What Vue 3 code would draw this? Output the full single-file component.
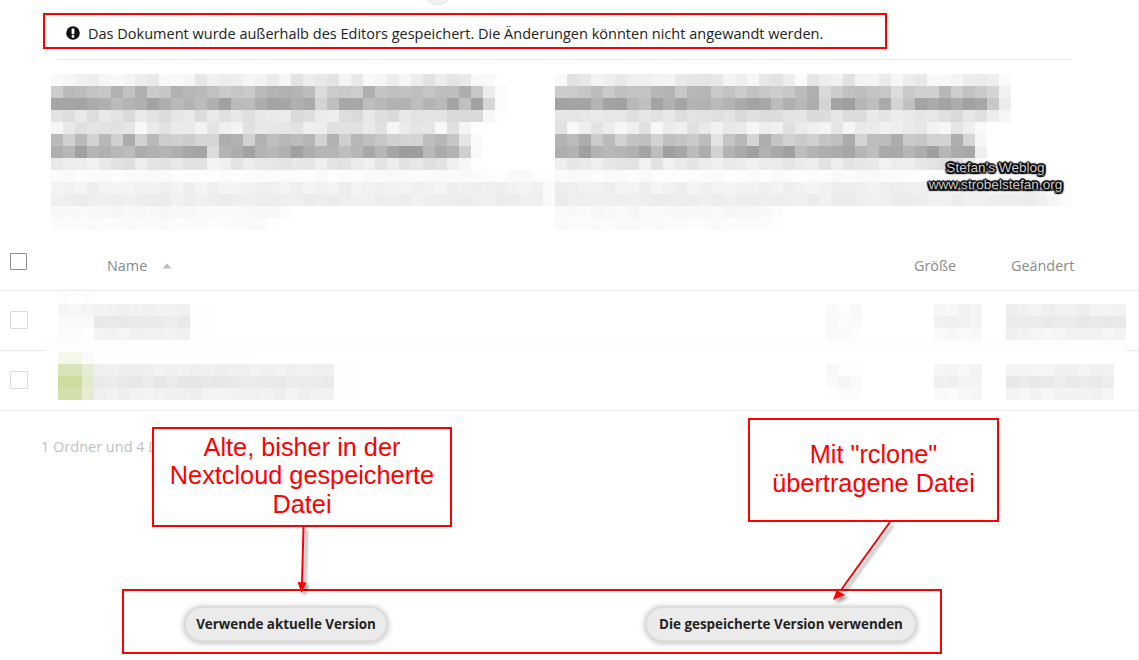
<script setup>
function noise(a, b) {
  let h = (a * 374761393 + b * 668265263) | 0
  h = Math.imul(h ^ (h >>> 13), 1274126177)
  return (((h ^ (h >>> 16)) >>> 0) % 1000) / 1000 - 0.5
}
function gray(v) {
  const n = Math.max(0, Math.min(255, Math.round(v)))
  return `rgb(${n},${n},${n})`
}
function blockRows(seed, spec, gaps) {
  return spec.map(([count, tone, spread, last, prev], r) => {
    const cells = []
    for (let c = 0; c < count; c++) {
      let v = tone + noise(seed + r, c) * spread
      const fromEnd = count - 1 - c
      if (fromEnd === 0) v += (255 - v) * last
      else if (fromEnd === 1) v += (255 - v) * prev
      const g = gaps[r]
      if (g && g.includes(c)) v += (255 - v) * 0.45
      cells.push(gray(v))
    }
    return cells
  })
}
const leftBlock = blockRows(11, [
  [38, 238, 26, 0.9, 0.5], [38, 190, 34, 0.95, 0.6], [38, 176, 34, 0.95, 0.45], [38, 226, 18, 0.95, 0.6],
  [36, 236, 26, 0.9, 0.5], [36, 192, 44, 0.92, 0.6], [36, 174, 34, 0.92, 0.5], [36, 232, 20, 0.9, 0.5],
  [42, 251, 5, 0.6, 0], [42, 241, 7, 0.7, 0], [42, 238, 6, 0.7, 0], [20, 248, 4, 0.5, 0], [19, 251, 3, 0.5, 0]
], { 1: [22], 2: [22], 3: [22, 23], 5: [13], 6: [13], 7: [13] })
const rightBlock = blockRows(47, [
  [38, 238, 26, 0.75, 0.3], [38, 192, 34, 0.8, 0.3], [38, 176, 34, 0.8, 0.3], [38, 226, 18, 0.75, 0.2],
  [36, 236, 26, 0.8, 0.4], [36, 192, 44, 0.8, 0.1], [36, 174, 34, 0.8, 0.1], [36, 232, 20, 0.8, 0.2],
  [43, 251, 5, 0.6, 0.3], [43, 241, 7, 0.75, 0.5], [43, 238, 6, 0.75, 0.5], [19, 248, 4, 0.5, 0], [19, 251, 3, 0.5, 0]
], { 1: [22, 28], 2: [22, 28], 3: [28], 5: [13], 6: [13], 7: [13] })

const X0 = 46
const COLS = 90
function span(list, y, x) {
  for (const [x1, x2, tone, tint, amp] of list) {
    if (x >= x1 && x < x2) {
      return tint ? tint : gray(tone + noise(y, x) * (amp === undefined ? 6 : amp))
    }
  }
  return null
}
const overlayPlan = [
  [[58, 94, 253, null, 2]],
  [[58, 94, 247], [94, 190, 240], [190, 214, 253, null, 1], [826, 862, 250], [934, 982, 245], [1006, 1120, 240]],
  [[58, 94, 249], [94, 190, 234], [190, 214, 253, null, 1], [826, 862, 249], [934, 982, 242], [1006, 1120, 234]],
  [[58, 94, 252, null, 2], [94, 190, 242], [190, 214, 254, null, 1], [826, 862, 251], [934, 982, 247], [1006, 1120, 243]],
  [[46, 1126, 253, null, 1]],
  [[58, 82, 0, '#f4f7ea'], [82, 94, 250, null, 2], [94, 250, 254, null, 1]],
  [[58, 82, 0, '#d9e4bb'], [82, 94, 0, '#e7edd4'], [94, 334, 241], [334, 358, 253, null, 1], [826, 862, 250], [934, 982, 246], [1006, 1110, 243]],
  [[58, 82, 0, '#cddc9f'], [82, 94, 0, '#e2ebcc'], [94, 334, 233], [334, 358, 253, null, 1], [826, 862, 249], [934, 982, 242], [1006, 1110, 234]],
  [[58, 82, 0, '#d3e0ac'], [82, 94, 0, '#e5ecd2'], [94, 334, 241], [334, 358, 253, null, 1], [826, 862, 251], [934, 982, 248], [1006, 1110, 243]]
]
const overlay = overlayPlan.map((list, r) => {
  const cells = []
  for (let c = 0; c < COLS; c++) cells.push(span(list, r + 3, X0 + c * 12))
  return cells
})
</script>

<template>
  <div class="page">
    <span class="top-dot"></span>

    <div class="notice">
      <svg class="bang" viewBox="0 0 14 14" width="14" height="14">
        <circle cx="7" cy="7" r="6.8" fill="#111" />
        <rect x="5.6" y="2.4" width="2.8" height="5.8" rx="0.7" fill="#fff" />
        <circle cx="7" cy="10.4" r="1.4" fill="#fff" />
      </svg>
      <span>Das Dokument wurde außerhalb des Editors gespeichert. Die Änderungen könnten nicht angewandt werden.</span>
    </div>
    <div class="rule"></div>

    <div class="intro">
      <div class="mosaic left">
        <div v-for="(row, r) in leftBlock" :key="r" class="mrow">
          <i v-for="(c, k) in row" :key="k" :style="{ background: c }"></i>
        </div>
      </div>
      <div class="mosaic right">
        <div v-for="(row, r) in rightBlock" :key="r" class="mrow">
          <i v-for="(c, k) in row" :key="k" :style="{ background: c }"></i>
        </div>
      </div>
    </div>

    <div class="table">
      <div class="thead">
        <span class="check strong"></span>
        <span class="th name">Name<svg class="sort" viewBox="0 0 10 6" width="10" height="6"><path d="M5 0.5 9.5 5.5H0.5Z" fill="#bdbdbd" /></svg></span>
        <span class="th">Größe</span>
        <span class="th">Geändert</span>
      </div>
      <div class="tr"><span class="check"></span></div>
      <div class="tr"><span class="check"></span></div>
      <div class="overlay">
        <div v-for="(row, r) in overlay" :key="r" class="mrow">
          <i v-for="(c, k) in row" :key="k" :style="{ background: c || 'transparent' }"></i>
        </div>
      </div>
    </div>

    <p class="summary">1 Ordner und 4 Dateien</p>

    <div class="actions">
      <button class="btn first">Verwende aktuelle Version</button>
      <button class="btn second">Die gespeicherte Version verwenden</button>
    </div>

    <!-- annotations laid over the screenshot -->
    <div class="mark mark-notice"></div>
    <div class="mark mark-actions"></div>
    <div class="callout callout-a">Alte, bisher in der<br />Nextcloud gespeicherte<br />Datei</div>
    <div class="callout callout-b">Mit "rclone"<br />übertragene Datei</div>
    <svg class="arrows" viewBox="0 0 1139 660" width="1139" height="660">
      <defs>
        <filter id="arrowShadow" x="-50%" y="-50%" width="200%" height="200%">
          <feDropShadow dx="3" dy="3" stdDeviation="1.6" flood-color="#000" flood-opacity="0.38" />
        </filter>
      </defs>
      <g filter="url(#arrowShadow)">
        <path d="M303.5 527 302 584" stroke="#f00" stroke-width="2" fill="none" />
        <path d="M297.5 582 306.5 582.5 301.5 593Z" fill="#f00" />
        <path d="M890 522 841 590" stroke="#f00" stroke-width="2" fill="none" />
        <path d="M836.5 590 845 595 833 600Z" fill="#f00" />
      </g>
    </svg>

    <div class="stamp">
      <span>Stefan's Weblog</span>
      <span>www.strobelstefan.org</span>
    </div>
  </div>
</template>

<style scoped>
.page {
  position: relative;
  width: 1139px;
  height: 660px;
  overflow: hidden;
  background: #fff;
  font-family: "Open Sans", "Liberation Sans", sans-serif;
  color: #222;
}
.page::after {
  content: "";
  position: absolute;
  top: 0;
  right: 0;
  bottom: 0;
  width: 1px;
  background: #ececec;
}
.top-dot {
  position: absolute;
  left: 424px;
  top: -22px;
  width: 26px;
  height: 25px;
  border-radius: 50%;
  background: #f2f2f2;
  border: 1px solid #e4e4e4;
}
.notice {
  display: flex;
  align-items: center;
  height: 59px;
  padding: 7px 0 0 66px;
  box-sizing: border-box;
  font-size: 14.53px;
  color: #222;
}
.bang {
  margin-right: 8px;
  flex: none;
}
.rule {
  height: 1px;
  margin: 0 67px 0 55px;
  background: #ebebeb;
}
.intro {
  display: flex;
  margin-top: 14px;
  height: 156px;
  padding-left: 51px;
}
.mosaic.left {
  width: 504px;
}
.mrow {
  display: flex;
  height: 12px;
}
.mrow i {
  display: block;
  flex: none;
  width: 12px;
  height: 12px;
}
.table {
  position: relative;
}
.thead {
  display: grid;
  grid-template-columns: 107px 807px 97px auto;
  align-items: center;
  height: 61px;
  box-sizing: border-box;
  border-bottom: 1px solid #e9e9e9;
  font-size: 14.4px;
}
.th {
  display: flex;
  align-items: center;
  padding-top: 11px;
  color: #8a8a8a;
}
.sort {
  margin-left: 15px;
}
.tr {
  display: flex;
  align-items: center;
  height: 60px;
  padding-bottom: 2px;
  box-sizing: border-box;
  border-bottom: 1px solid #e9e9e9;
}
.check {
  display: block;
  width: 17px;
  height: 17px;
  margin-left: 10px;
  border: 1px solid #dcdcdc;
  border-radius: 1px;
  box-sizing: border-box;
}
.tr .check {
  width: 18px;
  height: 18px;
}
.check.strong {
  margin-top: 3px;
  border-color: #8a8a8a;
}
.overlay {
  position: absolute;
  left: 46px;
  top: 62px;
}
.summary {
  margin: 26px 0 0 41px;
  height: 19px;
  line-height: 19px;
  font-size: 14.5px;
  color: #c2c2c2;
}
.actions {
  display: flex;
  margin-top: 150px;
  padding-left: 184px;
}
.btn {
  height: 36px;
  padding: 0;
  border: 2px solid #dcdcdc;
  border-radius: 18px;
  background: #ebebeb;
  box-shadow: 0 1px 6px rgba(0, 0, 0, 0.28);
  font-family: "Open Sans", "Liberation Sans", sans-serif;
  font-size: 13.4px;
  font-weight: 700;
  color: #222;
}
.first {
  width: 204px;
}
.second {
  width: 272px;
  margin-left: 257px;
}
.mark,
.callout {
  position: absolute;
  box-sizing: border-box;
  border: 2px solid #f00;
}
.mark-notice {
  left: 43px;
  top: 13px;
  width: 844px;
  height: 36px;
}
.mark-actions {
  left: 122px;
  top: 589px;
  width: 820px;
  height: 65px;
}
.callout {
  display: flex;
  align-items: center;
  justify-content: center;
  text-align: center;
  padding-bottom: 3px;
  background: #fff;
  color: #f00;
  font-family: "Liberation Sans", Arial, sans-serif;
  font-size: 25.3px;
  line-height: 28.5px;
}
.callout-a {
  left: 152px;
  top: 427px;
  width: 300px;
  height: 100px;
}
.callout-b {
  left: 748px;
  top: 418px;
  width: 251px;
  height: 104px;
}
.arrows {
  position: absolute;
  left: 0;
  top: 0;
  pointer-events: none;
}
.stamp {
  position: absolute;
  left: 928px;
  top: 160px;
  width: 135px;
  display: flex;
  flex-direction: column;
  align-items: center;
  font-family: "Liberation Sans", Arial, sans-serif;
  font-size: 13.6px;
  line-height: 16.5px;
  color: #cfcfcf;
  text-shadow: 2px 0 1px #000, -2px 0 1px #000, 0 2px 1px #000, 0 -2px 1px #000, 1.5px 1.5px 1px #000, -1.5px -1.5px 1px #000, 1.5px -1.5px 1px #000, -1.5px 1.5px 1px #000, 0 0 1px #000;
}
</style>
